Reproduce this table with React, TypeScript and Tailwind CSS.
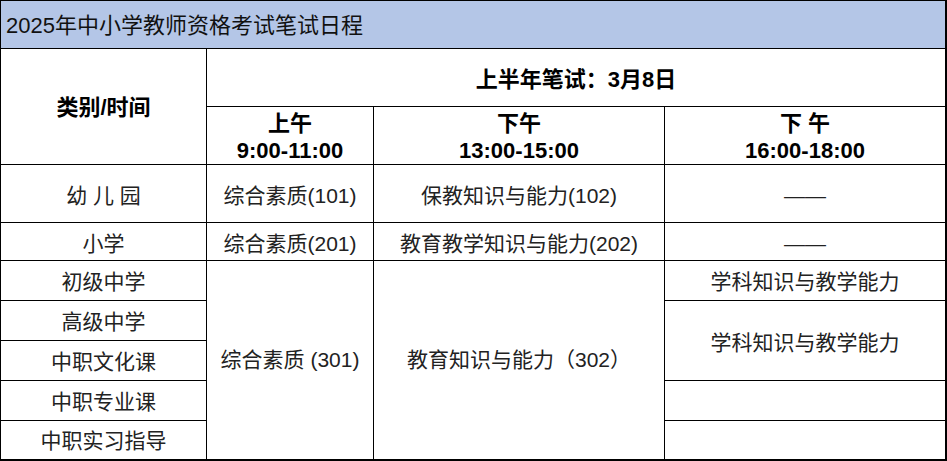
const font = "font-['Liberation_Sans','Noto_Sans_CJK_SC',sans-serif]";

const cell = "flex items-center justify-center border-r border-b border-black text-center";
const head = "font-bold text-black text-[22px]";

export default function App() {
  return (
    <div className={`w-[947px] h-[461px] bg-white ${font} text-[21px] text-[#222]`}>
      <div className="h-[49px] border-t border-l border-r-2 border-b border-black bg-[#b4c6e7] flex items-center pl-[5px] pt-[2px] text-[22px] text-[#111]">
        2025年中小学教师资格考试笔试日程
      </div>
      <div className="grid grid-cols-[206px_167px_291px_282px] grid-rows-[58px_58px_58px_38px_40px_40px_40px_40px_40px] border-l border-black">
        <div className={`${cell} row-span-2 ${head} pt-[2px]`}>类别/时间</div>
        <div className={`${cell} col-span-3 border-r-2 ${head} pt-[4px]`}>上半年笔试：3月8日</div>
        <div className={`${cell} flex-col ${head} leading-[27px] pt-[2px]`}>
          <span>上午</span>
          <span>9:00-11:00</span>
        </div>
        <div className={`${cell} flex-col ${head} leading-[27px] pt-[2px]`}>
          <span>下午</span>
          <span>13:00-15:00</span>
        </div>
        <div className={`${cell} border-r-2 flex-col ${head} leading-[27px] pt-[2px]`}>
          <span>下 午</span>
          <span>16:00-18:00</span>
        </div>

        <div className={`${cell} pt-[5px]`}>幼 儿 园</div>
        <div className={`${cell} pt-[5px]`}>综合素质(101)</div>
        <div className={`${cell} pt-[5px]`}>保教知识与能力(102)</div>
        <div className={`${cell} border-r-2 pt-[5px]`}>——</div>

        <div className={`${cell} pt-[5px]`}>小学</div>
        <div className={`${cell} pt-[5px]`}>综合素质(201)</div>
        <div className={`${cell} pt-[5px]`}>教育教学知识与能力(202)</div>
        <div className={`${cell} border-r-2 pt-[5px]`}>——</div>

        <div className={`${cell} pt-[2px]`}>初级中学</div>
        <div className={`${cell} row-span-5 col-start-2 row-start-5 border-b-2`}>综合素质 (301)</div>
        <div className={`${cell} row-span-5 col-start-3 row-start-5 border-b-2`}>教育知识与能力（302）</div>
        <div className={`${cell} col-start-4 row-start-5 border-r-2 pt-[2px]`}>学科知识与教学能力</div>

        <div className={`${cell} col-start-1 row-start-6 pt-[2px]`}>高级中学</div>
        <div className={`${cell} col-start-4 row-start-6 row-span-2 border-r-2 pt-[4px]`}>学科知识与教学能力</div>

        <div className={`${cell} col-start-1 row-start-7 pt-[2px]`}>中职文化课</div>

        <div className={`${cell} col-start-1 row-start-8 pt-[2px]`}>中职专业课</div>
        <div className={`${cell} col-start-4 row-start-8 border-r-2`} />

        <div className={`${cell} col-start-1 row-start-9 border-b-2 pt-[2px]`}>中职实习指导</div>
        <div className={`${cell} col-start-4 row-start-9 border-r-2 border-b-2`} />
      </div>
    </div>
  );
}
